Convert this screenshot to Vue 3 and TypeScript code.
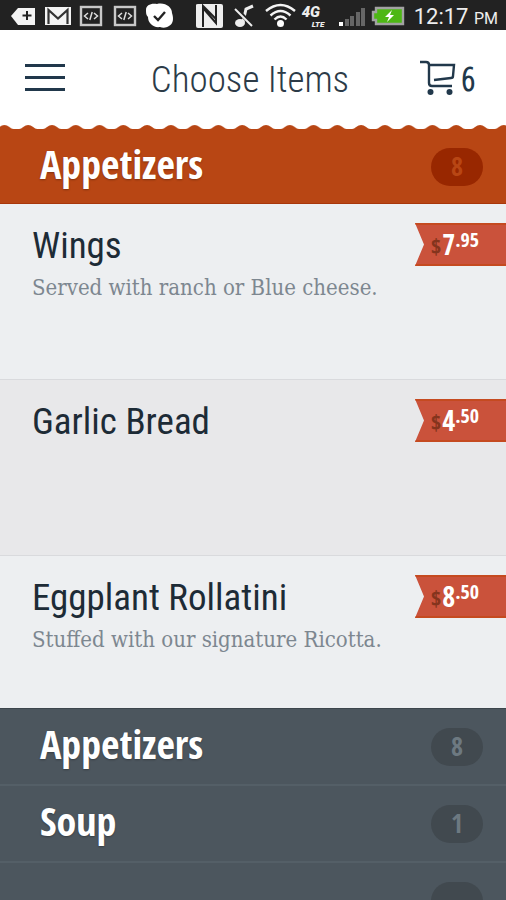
<script setup lang="ts">
interface MenuItem {
  name: string
  description: string
  dollars: string
  cents: string
}

interface Section {
  name: string
  count: string
}

const cartCount = 6

const openSection: Section = { name: 'Appetizers', count: '8' }

const items: MenuItem[] = [
  { name: 'Wings', description: 'Served with ranch or Blue cheese.', dollars: '7', cents: '.95' },
  { name: 'Garlic Bread', description: '', dollars: '4', cents: '.50' },
  { name: 'Eggplant Rollatini', description: 'Stuffed with our signature Ricotta.', dollars: '8', cents: '.50' },
]

const sections: Section[] = [
  { name: 'Appetizers', count: '8' },
  { name: 'Soup', count: '1' },
  { name: '', count: '' },
]
</script>

<template>
  <div class="screen">
    <div class="status">
      <svg class="status-left" width="190" height="30" viewBox="0 0 190 30" aria-hidden="true">
        <path d="M11 16 18 8H35V25H18Z" fill="#f4f4f4" />
        <path d="M27 11v9M22.500 15.500h9" stroke="#222" stroke-width="2" />
        <rect x="45" y="7" width="26" height="18" fill="#f4f4f4" />
        <path d="M48.500 24V10L58 18.500 67.500 10V24" fill="none" stroke="#333" stroke-width="2.200" />
        <g v-for="x in [80, 114]" :key="x" :transform="`translate(${x} 6)`">
          <rect x="1" y="1" width="20" height="18" fill="#222" stroke="#c8c8c8" stroke-width="2.400" />
          <path d="M8 7 4.500 10 8 13M14 7l3.500 3-3.500 3M12.200 6 9.800 14" fill="none" stroke="#ddd" stroke-width="1.500" />
        </g>
        <path d="M146 10C146 5 151 3 157 4c8-2 15 3 15 9 2 6 1 11-3 13-3 2-6 2-9 1-7 1-12-4-12-10-2-2-2-4-2-7Z" fill="#fff" />
        <path d="m154 16 4 4 7-8" fill="none" stroke="#222" stroke-width="2.400" />
      </svg>
      <div class="status-right">
        <svg width="104" height="30" viewBox="197 0 104 30" aria-hidden="true">
          <path d="M198 5q0-1 2-1h23q2 0 2 2v20q0 2-2 2h-23q-2 0-2-2Z" fill="#eee" />
          <path d="M205 27V8L218 23V5M205 8V6L218 19" fill="none" stroke="#222" stroke-width="2" />
          <path d="M245 22 248 9 255 6" stroke="#eee" stroke-width="3" fill="none" />
          <ellipse cx="242" cy="23" rx="5" ry="4" fill="#eee" />
          <path d="m236 7 19 19" stroke="#222" stroke-width="4" />
          <path d="m237 9 17 17" stroke="#eee" stroke-width="2" />
          <g fill="none" stroke="#f4f4f4" stroke-width="2.400">
            <path d="M268 11q14.500-12 29 0" />
            <path d="M272.500 15.500q10-9 20 0" />
            <path d="M276.500 19.500q6-6 12 0" />
          </g>
          <circle cx="282.500" cy="23.500" r="3.500" fill="#fff" />
        </svg>
        <span class="network"><b>4G</b><b class="lte">LTE</b></span>
        <svg width="68" height="30" viewBox="340 0 68 30" aria-hidden="true">
          <rect x="341" y="22" width="4" height="4" fill="#fff" />
          <g fill="#666">
            <rect x="347" y="19" width="4" height="7" />
            <rect x="352" y="16" width="4" height="10" />
            <rect x="358" y="12" width="4" height="14" />
            <rect x="363" y="8" width="4" height="18" />
          </g>
          <path d="M378 8H405V24H378V20H375V12H378Z" fill="#4db714" stroke="#a2a2a2" stroke-width="2.400" />
          <path d="m394 10-7 7h4l-2 5 7-7h-4Z" fill="#fff" />
        </svg>
        <span class="clock">12:17 <small>PM</small></span>
      </div>
    </div>

    <header class="topbar">
      <button class="menu" type="button" aria-label="Menu">
        <span></span><span></span><span></span>
      </button>
      <h1>Choose Items</h1>
      <button class="cart" type="button" aria-label="Cart">
        <svg width="36" height="36" viewBox="0 0 36 36" aria-hidden="true">
          <path d="M0 2H6Q9 2 9 5V23Q9 26 12 26H32M9 5H34L33 16Q33 18 31 18L14 20" fill="none" stroke="#21384b" stroke-width="2.400" />
          <circle cx="10.500" cy="32" r="3" fill="#21384b" />
          <circle cx="29.500" cy="32" r="3" fill="#21384b" />
        </svg>
        <span>{{ cartCount }}</span>
      </button>
    </header>

    <main>
      <svg class="scallop" height="5" aria-hidden="true">
        <defs>
          <pattern id="scallop-edge" x="16.200" width="23.780" height="5" patternUnits="userSpaceOnUse">
            <path d="M0 5V4H3Q5 4 7 2Q9.500 0 12 0T17 2Q19 4 21 4H24V5Z" fill="#b84614" />
          </pattern>
        </defs>
        <rect width="100%" height="5" fill="url(#scallop-edge)" />
      </svg>
      <button class="section open" type="button">
        <span class="label">{{ openSection.name }}</span>
        <span class="count">{{ openSection.count }}</span>
      </button>

      <ul>
        <li v-for="item in items" :key="item.name">
          <div class="text">
            <h2>{{ item.name }}</h2>
            <p v-if="item.description">{{ item.description }}</p>
          </div>
          <div class="price">
            <span class="sign">$</span><span class="dollars">{{ item.dollars }}</span><span class="cents">{{ item.cents }}</span>
          </div>
        </li>
      </ul>

      <button v-for="(section, i) in sections" :key="i" class="section" type="button">
        <span class="label">{{ section.name }}</span>
        <span class="count">{{ section.count }}</span>
      </button>
    </main>
  </div>
</template>

<style>
body {
  margin: 0;
}
</style>

<style scoped>
.screen {
  display: flex;
  flex-direction: column;
  height: 100vh;
  overflow: hidden;
  background: #fff;
  color: #1d2b36;
  font-family: 'Roboto Condensed', Roboto, sans-serif;
}

button {
  margin: 0;
  padding: 0;
  border: 0;
  background: none;
  color: inherit;
  font: inherit;
  cursor: pointer;
}

.status {
  display: flex;
  flex: none;
  justify-content: space-between;
  height: 30px;
  background: #222;
  color: #eee;
  font-family: Roboto, sans-serif;
}

.status svg {
  display: block;
  flex: none;
}

.status-right {
  display: flex;
  padding-right: 8px;
}

.network {
  display: flex;
  flex-direction: column;
  width: 39px;
  padding: 5px 0 0 3px;
  box-sizing: border-box;
  font-size: 15px;
  font-style: italic;
  line-height: 15px;
}

.network b {
  font-weight: 900;
}

.network .lte {
  padding-left: 10px;
  font-size: 8px;
  line-height: 9px;
}

.clock {
  padding-left: 8px;
  font-size: 22px;
  line-height: 33px;
  white-space: nowrap;
}

.clock small {
  font-size: 16px;
}

.topbar {
  display: grid;
  flex: none;
  grid-template-columns: 1fr auto 1fr;
  align-items: center;
  height: 95px;
  padding: 0 31px 0 25px;
}

.menu {
  display: flex;
  flex-direction: column;
  gap: 9px;
  width: 40px;
}

.menu span {
  height: 3px;
  background: #21384b;
}

h1 {
  margin: 0;
  padding-top: 4px;
  color: #2c3b48;
  font-size: 37px;
  font-weight: 300;
  line-height: 48px;
}

.cart {
  display: flex;
  align-items: center;
  justify-self: end;
  gap: 5px;
  color: #21384b;
  font-family: 'Open Sans Condensed Light', 'Open Sans Condensed', sans-serif;
  font-size: 34px;
  font-weight: 700;
  line-height: 36px;
}

main {
  flex: 1;
  min-height: 0;
  overflow: hidden;
}

.scallop {
  display: block;
  width: 100%;
}

.section {
  display: flex;
  align-items: center;
  justify-content: space-between;
  width: 100%;
  height: 77px;
  padding: 0 23px 0 40px;
  box-sizing: border-box;
  border-bottom: 2px solid #545f67;
  background: #4c565e;
  color: #fff;
  text-align: left;
}

.section.open {
  height: 74px;
  border-bottom: 1px solid #a8370b;
  background: #b84614;
}

.label {
  padding-bottom: 6px;
  font-family: 'Open Sans Condensed', 'Open Sans', sans-serif;
  font-size: 40px;
  font-weight: 700;
  line-height: 44px;
  text-shadow: 0 1px 2px rgba(0, 0, 0, 0.3);
}

.count {
  width: 52px;
  height: 38px;
  border-radius: 19px;
  background: #41494f;
  color: #6d7981;
  font-family: 'Open Sans Condensed', 'Open Sans', sans-serif;
  font-size: 26px;
  font-weight: 700;
  line-height: 36px;
  text-align: center;
}

.open .count {
  background: #982700;
  color: #b84614;
}

ul {
  margin: 0;
  padding: 0;
  list-style: none;
}

li {
  display: flex;
  align-items: flex-start;
  justify-content: space-between;
  height: 176px;
  padding: 19px 0 0 32px;
  box-sizing: border-box;
  border-bottom: 1px solid #d9dadd;
  background: #edeff1;
}

li:nth-child(even) {
  background: #e8e8ea;
}

li:last-child {
  height: 153px;
  border-bottom: 1px solid #3c464c;
}

.text {
  padding-top: 1px;
}

h2 {
  margin: 0;
  font-size: 37px;
  font-weight: 400;
  line-height: 44px;
}

p {
  margin: 6px 0 0;
  color: #7d8790;
  font-family: 'DejaVu Serif Condensed', 'DejaVu Serif', serif;
  font-size: 22px;
  line-height: 28px;
}

.price {
  display: flex;
  flex: none;
  width: 91px;
  height: 43px;
  padding-left: 16px;
  box-sizing: border-box;
  background: #ca523b;
  clip-path: polygon(0 0, 100% 0, 100% 100%, 0 100%, 9px 50%);
  border-top: 2px solid #c54a20;
  border-bottom: 2px solid #c54a20;
  color: #fff;
  font-family: 'Open Sans Condensed', 'Open Sans', sans-serif;
  font-weight: 700;
}

.sign {
  padding-right: 1px;
  color: #84341d;
  font-size: 22px;
  line-height: 40px;
}

.dollars {
  font-size: 28px;
  line-height: 38px;
}

.cents {
  font-size: 20px;
  line-height: 30px;
}
</style>
